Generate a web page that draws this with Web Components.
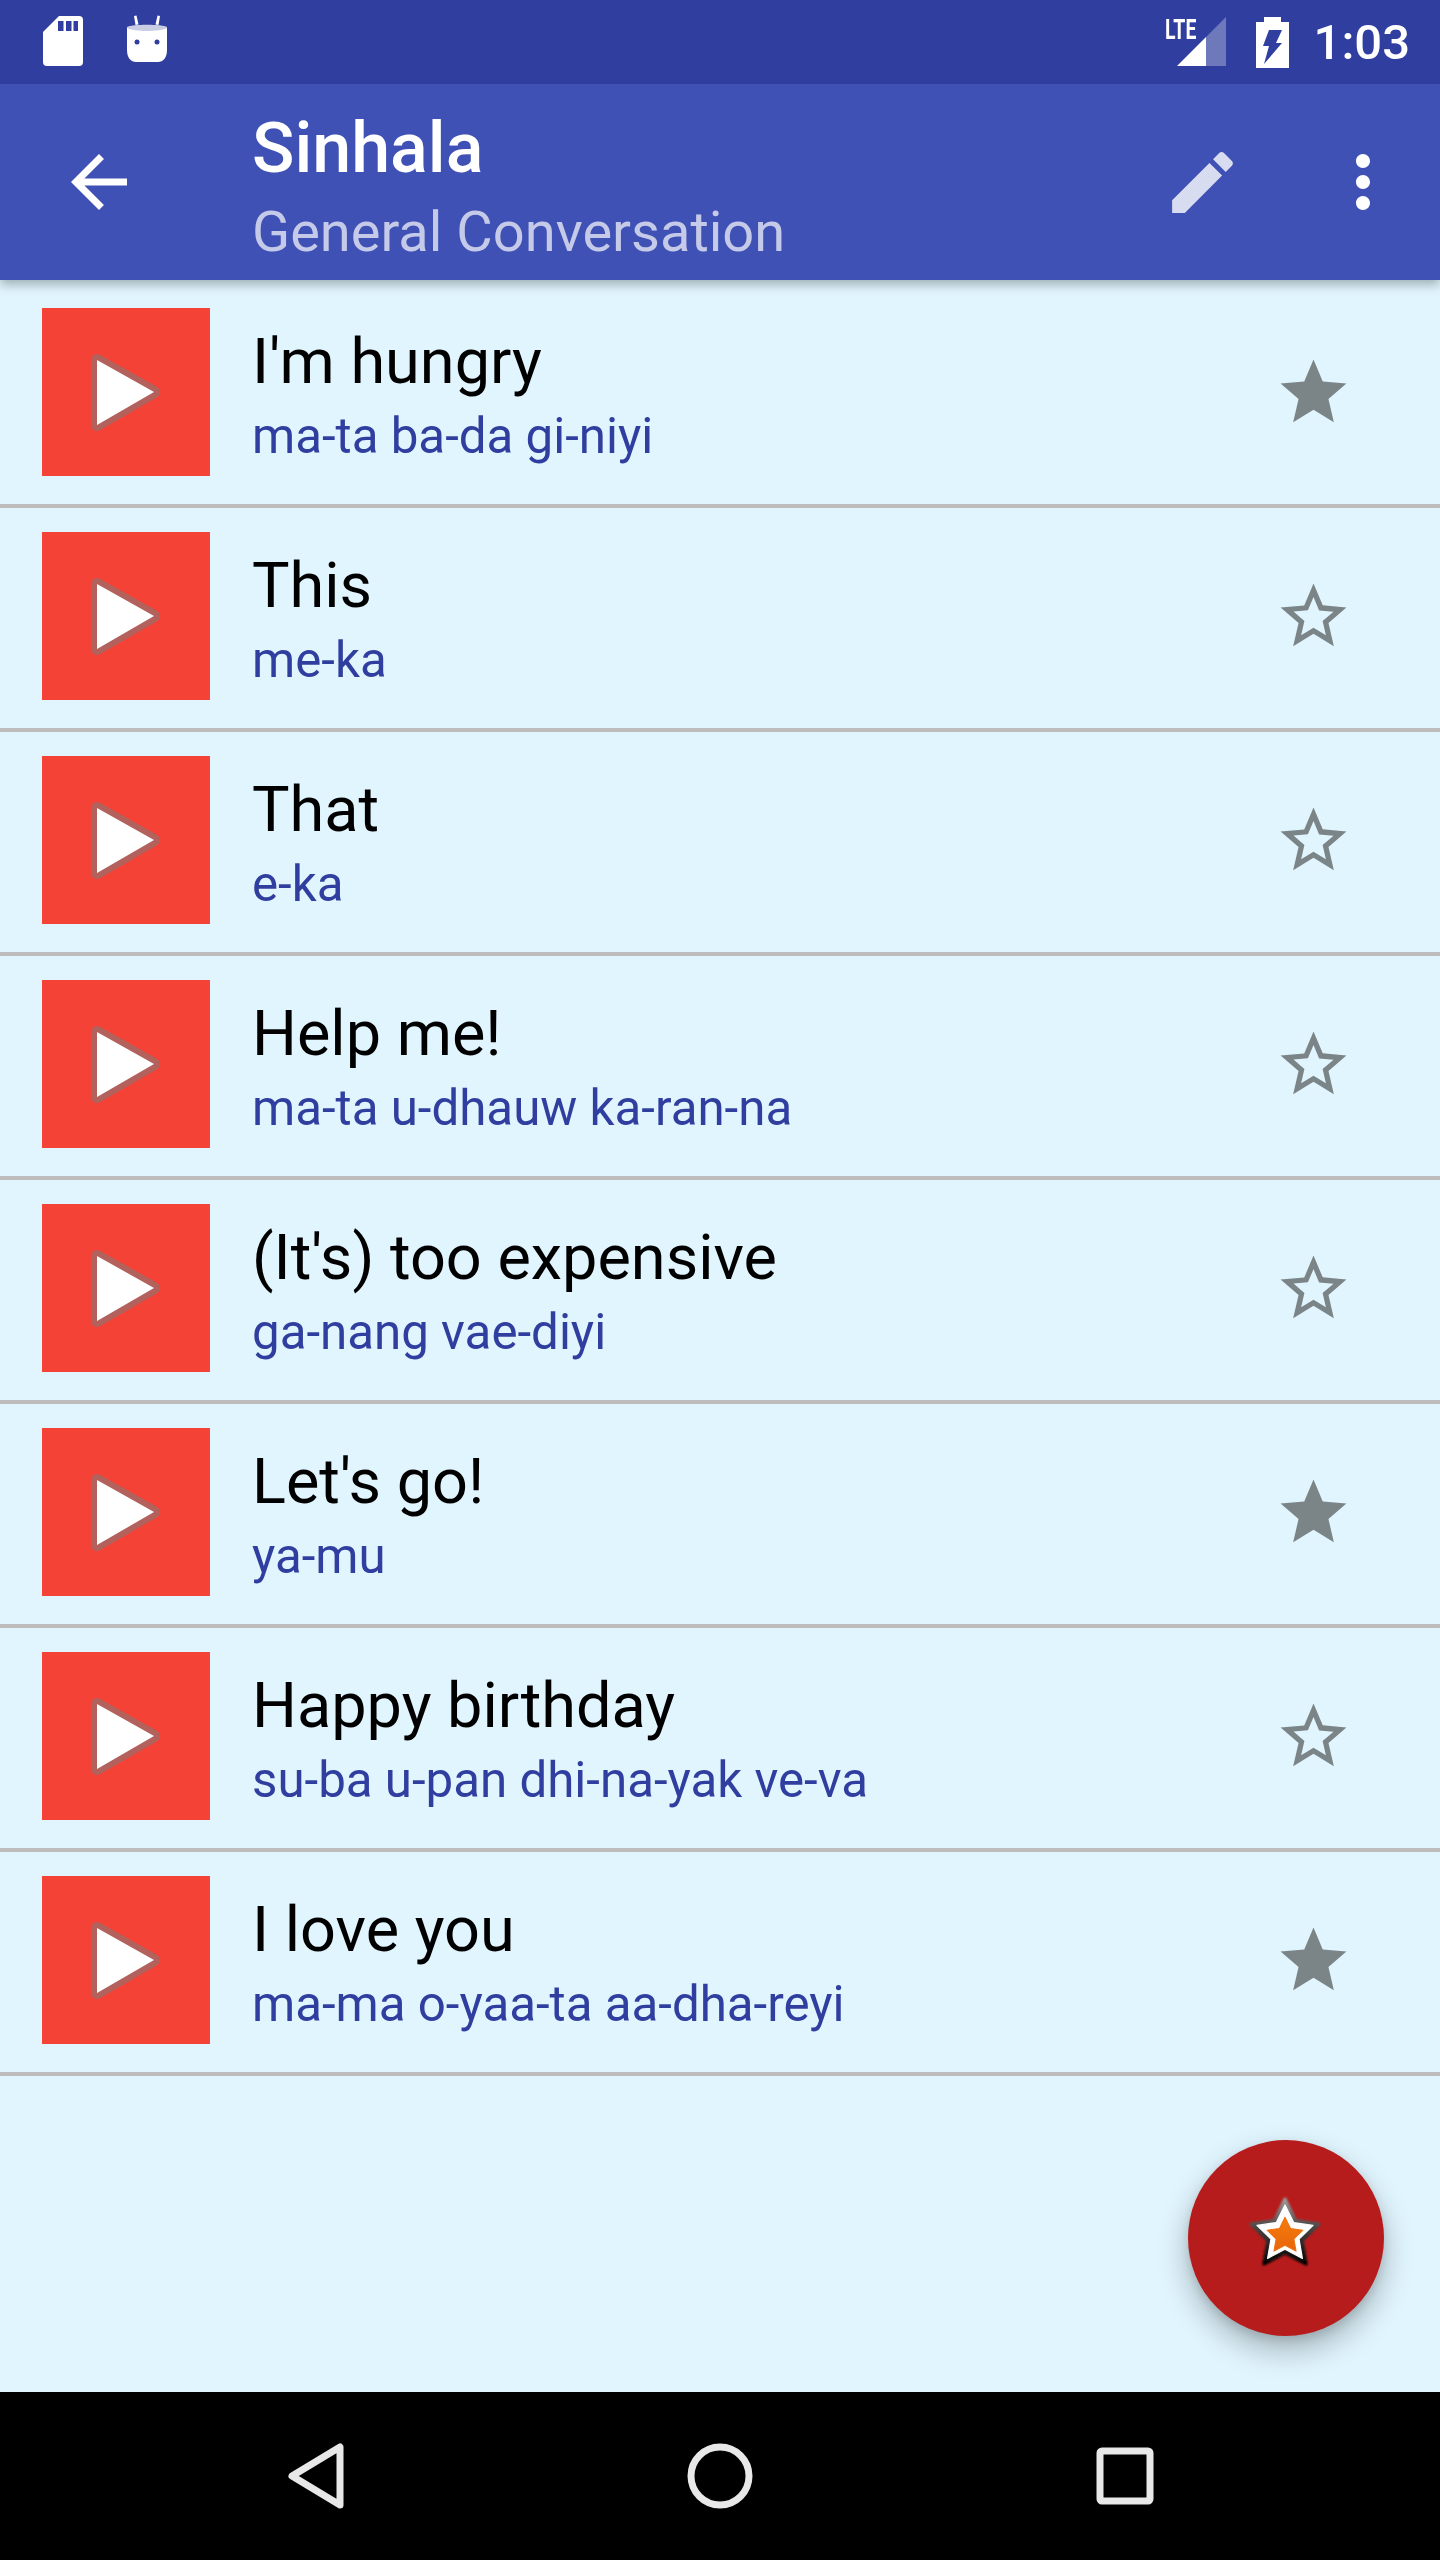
<!DOCTYPE html>
<html>
<head>
<meta charset="utf-8">
<title>Sinhala</title>
<style>
html, body { margin: 0; padding: 0; background: #000; }
</style>
</head>
<body>
<phrase-app>
    <status-bar slot="top"></status-bar>
    <app-bar slot="top" heading="Sinhala" subheading="General Conversation"></app-bar>
    <phrase-row starred><span slot="phrase">I'm hungry</span><span slot="roman">ma-ta ba-da gi-niyi</span></phrase-row>
    <phrase-row><span slot="phrase">This</span><span slot="roman">me-ka</span></phrase-row>
    <phrase-row><span slot="phrase">That</span><span slot="roman">e-ka</span></phrase-row>
    <phrase-row><span slot="phrase">Help me!</span><span slot="roman">ma-ta u-dhauw ka-ran-na</span></phrase-row>
    <phrase-row><span slot="phrase">(It's) too expensive</span><span slot="roman">ga-nang vae-diyi</span></phrase-row>
    <phrase-row starred><span slot="phrase">Let's go!</span><span slot="roman">ya-mu</span></phrase-row>
    <phrase-row><span slot="phrase">Happy birthday</span><span slot="roman">su-ba u-pan dhi-na-yak ve-va</span></phrase-row>
    <phrase-row starred><span slot="phrase">I love you</span><span slot="roman">ma-ma o-yaa-ta aa-dha-reyi</span></phrase-row>
    <fav-button slot="fab"></fav-button>
    <nav-bar slot="bottom"></nav-bar>
</phrase-app>

<script>
// Page shell: bars on top, scrolling list in the middle, nav bar at the bottom
class PhraseApp extends HTMLElement {
    constructor() {
        super();
        this.attachShadow({ mode: "open" });
        this.shadowRoot.innerHTML = `<style>
            :host { display: flex; flex-direction: column; width: 1440px; height: 2560px;
                    position: relative; overflow: hidden; background: #E1F5FE;
                    font-family: Roboto, "Liberation Sans", sans-serif; }
            .top { position: relative; z-index: 2; box-shadow: 0 5px 10px rgba(0,0,0,.28); }
            .list { flex: 1; padding-top: 4px; }
        </style>
        <div class="top"><slot name="top"></slot></div>
        <div class="list"><slot></slot></div>
        <slot name="fab"></slot>
        <slot name="bottom"></slot>`;
    }
}

class StatusBar extends HTMLElement {
    constructor() {
        super();
        this.attachShadow({ mode: "open" });
        this.shadowRoot.innerHTML = `<style>
            :host { display: flex; height: 84px; background: #303F9F; align-items: center;
                    justify-content: space-between; padding: 0 30px 0 43px; box-sizing: border-box; color: #fff; }
            .side { display: flex; align-items: center; }
            svg { display: block; }
            .signal { position: relative; width: 61px; height: 50px; margin-right: 30px; }
            .lte { position: absolute; left: 0; top: 0; font: 700 27px/27px Roboto, sans-serif;
                   transform: scaleX(.72); transform-origin: 0 0; letter-spacing: 0; }
            .time { font-size: 49px; font-weight: 500; line-height: 49px; margin-left: 25px; }
        </style>
        <div class="side">
            <svg width="40" height="50" viewBox="0 0 40 50" style="margin-top:-2px">
                <path fill="#fff" d="M16 0h20a4 4 0 0 1 4 4v42a4 4 0 0 1-4 4H4a4 4 0 0 1-4-4V16z"/>
                <path fill="#303F9F" d="M15 5h5.500v10H15zM23 5h5.500v10H23zM30.500 5H35v10h-4.500z"/>
            </svg>
            <svg width="42" height="48" viewBox="0 0 42 48" style="margin-left:43px;margin-top:-6px">
                <path fill="#fff" d="M8 1l2.500-.5 2 9-3 .5zM34 1l-2.500-.5-2 9 3 .5z"/>
                <path fill="#c9cde4" d="M1 12c4-3 36-3 40 0v6H1z"/>
                <path fill="#fff" d="M1 13c6 4 34 4 40 0v22c0 8-4 12-9 12H10c-5 0-9-4-9-12z"/>
                <circle cx="11" cy="27" r="2.500" fill="#303F9F"/>
                <circle cx="31" cy="27" r="2.500" fill="#303F9F"/>
            </svg>
        </div>
        <div class="side">
            <div class="signal">
                <svg width="61" height="50" viewBox="0 0 61 50">
                    <path fill="#fff" fill-opacity=".3" d="M61 0v49H41V20z"/>
                    <path fill="#fff" d="M12 49l29-29v29z"/>
                </svg>
                <span class="lte">LTE</span>
            </div>
            <svg width="33" height="51" viewBox="0 0 33 51">
                <path fill="#fff" d="M8 0h17v5h8v46H0V5h8z"/>
                <path fill="#303F9F" d="M13 13h13l-6 13h6L8 47l5-18H7z"/>
            </svg>
            <span class="time">1:03</span>
        </div>`;
    }
}

class AppBar extends HTMLElement {
    constructor() {
        super();
        this.attachShadow({ mode: "open" });
        this.shadowRoot.innerHTML = `<style>
            :host { display: flex; height: 196px; background: #3F51B5; align-items: center;
                    padding: 0 35px 0 57px; box-sizing: border-box; }
            svg { display: block; flex: none; }
            .titles { flex: 1; margin-left: 111px; margin-top: 9px; }
            .heading { color: #fff; font-size: 70px; font-weight: 500; line-height: 80px; }
            .sub { color: #C5CAE9; font-size: 56px; line-height: 66px; margin-top: 11px; }
            .edit { margin-right: 78px; }
        </style>
        <svg width="84" height="84" viewBox="0 0 24 24"><path fill="#fff" d="M20 11H7.830l5.590-5.590L12 4l-8 8 8 8 1.410-1.410L7.830 13H20v-2z"/></svg>
        <div class="titles">
            <div class="heading"></div>
            <div class="sub"></div>
        </div>
        <svg class="edit" width="81" height="81" viewBox="0 0 24 24"><path fill="#fff" fill-opacity=".8" d="M3 17.250V21h3.750L17.810 9.940l-3.750-3.750L3 17.250zM20.710 7.040c.39-.39.39-1.020 0-1.410l-2.340-2.340c-.39-.39-1.020-.39-1.410 0l-1.830 1.830 3.750 3.750 1.830-1.830z"/></svg>
        <svg width="84" height="84" viewBox="0 0 24 24"><path fill="#fff" d="M12 8c1.100 0 2-.9 2-2s-.9-2-2-2-2 .9-2 2 .9 2 2 2zm0 2c-1.100 0-2 .9-2 2s.9 2 2 2 2-.9 2-2-.9-2-2-2zm0 6c-1.100 0-2 .9-2 2s.9 2 2 2 2-.9 2-2-.9-2-2-2z"/></svg>`;
    }
    connectedCallback() {
        this.shadowRoot.querySelector(".heading").textContent = this.getAttribute("heading");
        this.shadowRoot.querySelector(".sub").textContent = this.getAttribute("subheading");
    }
}

const STAR_FULL = "M12 17.270L18.180 21l-1.640-7.030L22 9.240l-7.190-.61L12 2 9.190 8.630 2 9.240l5.460 4.730L5.820 21z";
const STAR_EMPTY = "M22 9.240l-7.190-.62L12 2 9.190 8.630 2 9.240l5.460 4.730L5.820 21 12 17.270 18.180 21l-1.630-7.030L22 9.240zM12 15.400l-3.760 2.270 1-4.280-3.320-2.880 4.380-.38L12 6.100l1.710 4.040 4.380.38-3.320 2.880 1 4.280L12 15.400z";

class PhraseRow extends HTMLElement {
    constructor() {
        super();
        this.attachShadow({ mode: "open" });
        this.shadowRoot.innerHTML = `<style>
            :host { display: flex; height: 224px; box-sizing: border-box; padding: 24px 87px 28px 42px;
                    border-bottom: 4px solid #BDBDBD; align-items: center; }
            .play { display: block; flex: none; width: 168px; height: 168px; background: #F44336; }
            .text { flex: 1; margin-left: 42px; margin-top: 7px; }
            .phrase { color: #000; font-size: 63px; line-height: 74px; }
            .roman { color: #303F9F; font-size: 49.25px; line-height: 60px; margin-top: 7px; }
            .star { display: block; flex: none; }
        </style>
        <svg class="play" viewBox="0 0 168 168">
            <polygon points="55,52 112,84 55,117" fill="#fff" stroke="#b2615c" stroke-width="12" stroke-linejoin="round"/>
            <polygon points="55,52 112,84 55,117" fill="#fff"/>
        </svg>
        <div class="text">
            <div class="phrase"><slot name="phrase"></slot></div>
            <div class="roman"><slot name="roman"></slot></div>
        </div>
        <svg class="star" width="79" height="79" viewBox="0 0 24 24"><path fill="#7B8487"></path></svg>`;
    }
    connectedCallback() {
        this.shadowRoot.querySelector(".star path").setAttribute("d", this.hasAttribute("starred") ? STAR_FULL : STAR_EMPTY);
    }
}

class FavButton extends HTMLElement {
    constructor() {
        super();
        this.attachShadow({ mode: "open" });
        this.shadowRoot.innerHTML = `<style>
            :host { position: absolute; left: 1188px; top: 2140px; width: 196px; height: 196px; border-radius: 50%;
                    background: #B71C1C; box-shadow: 0 14px 30px rgba(0,0,0,.28), 0 4px 10px rgba(0,0,0,.1);
                    display: flex; align-items: center; justify-content: center; }
            svg { display: block; margin-top: -6px; margin-left: -2px; }
        </style>
        <svg width="96" height="96" viewBox="-48 -48 96 96">
            <defs>
                <polygon id="s" points="0,-36 10.600,-14.600 34.200,-11.100 17.100,5.600 21.200,29.100 0,18 -21.200,29.100 -17.100,5.600 -34.200,-11.100 -10.600,-14.600"/>
                <linearGradient id="edge" x1="0" y1="0" x2="0" y2="1">
                    <stop offset="0" stop-color="#a0a0a0"/><stop offset=".45" stop-color="#444"/><stop offset="1" stop-color="#000"/>
                </linearGradient>
                <linearGradient id="core" x1="0" y1="0" x2="0" y2="1">
                    <stop offset="0" stop-color="#f57c0a"/><stop offset="1" stop-color="#e8650c"/>
                </linearGradient>
                <filter id="soft" x="-20%" y="-20%" width="140%" height="140%"><feGaussianBlur stdDeviation="1.200"/></filter>
            </defs>
            <use href="#s" fill="url(#edge)" stroke="url(#edge)" stroke-width="3" stroke-linejoin="round" filter="url(#soft)"/>
            <use href="#s" fill="#fff" transform="translate(0 -.5) scale(.82)" stroke="#fff" stroke-width="1.500" stroke-linejoin="round"/>
            <use href="#s" fill="url(#core)" transform="translate(0 1) scale(.52)" stroke="#f07010" stroke-width="2" stroke-linejoin="round"/>
        </svg>`;
    }
}

class NavBar extends HTMLElement {
    constructor() {
        super();
        this.attachShadow({ mode: "open" });
        this.shadowRoot.innerHTML = `<style>
            :host { display: grid; grid-template-columns: repeat(3, 404px); justify-content: center;
                    justify-items: center; align-items: center; height: 168px; background: #000; }
            svg { display: block; fill: none; stroke: #E8E8E8; stroke-width: 7; stroke-linejoin: round; }
        </style>
        <svg width="72" height="72" viewBox="0 0 72 72"><polygon points="60,7 60,65 12,36"/></svg>
        <svg width="72" height="72" viewBox="0 0 72 72"><circle cx="36" cy="36" r="29"/></svg>
        <svg width="72" height="72" viewBox="0 0 72 72"><rect x="12" y="11" width="50" height="50" rx="2"/></svg>`;
    }
}

customElements.define("phrase-app", PhraseApp);
customElements.define("status-bar", StatusBar);
customElements.define("app-bar", AppBar);
customElements.define("phrase-row", PhraseRow);
customElements.define("fav-button", FavButton);
customElements.define("nav-bar", NavBar);
</script>
</body>
</html>
